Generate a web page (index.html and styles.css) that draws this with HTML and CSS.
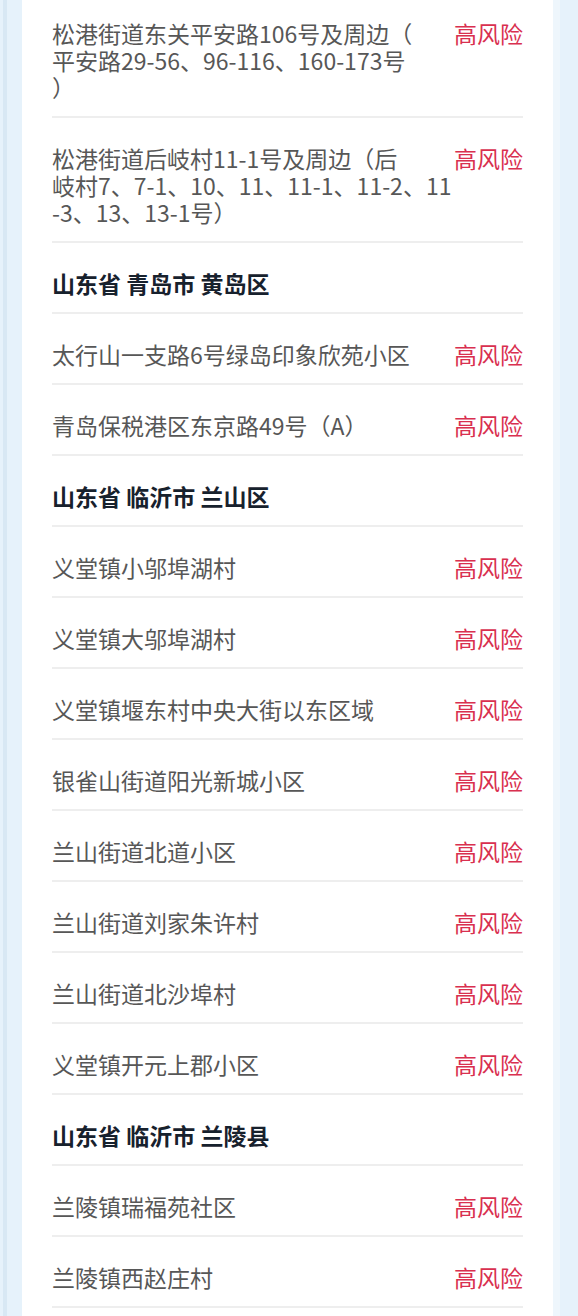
FILE: index.html
```html
<!DOCTYPE html>
<html lang="zh-CN">
<head>
<meta charset="utf-8">
<title>风险地区</title>
<link rel="stylesheet" href="styles.css">
</head>
<body>
<div class="page">
  <div class="card">
    <ul class="list">
      <li class="row"><span class="name">松港街道东关平安路106号及周边（<br>平安路29-56、96-116、160-173号<br>）</span><span class="risk">高风险</span></li>
      <li class="row"><span class="name">松港街道后岐村11-1号及周边（后<br>岐村7、7-1、10、11、11-1、11-2、11<br>-3、13、13-1号）</span><span class="risk">高风险</span></li>
      <li class="row region">山东省 青岛市 黄岛区</li>
      <li class="row"><span class="name">太行山一支路6号绿岛印象欣苑小区</span><span class="risk">高风险</span></li>
      <li class="row"><span class="name">青岛保税港区东京路49号（A）</span><span class="risk">高风险</span></li>
      <li class="row region">山东省 临沂市 兰山区</li>
      <li class="row"><span class="name">义堂镇小邬埠湖村</span><span class="risk">高风险</span></li>
      <li class="row"><span class="name">义堂镇大邬埠湖村</span><span class="risk">高风险</span></li>
      <li class="row"><span class="name">义堂镇堰东村中央大街以东区域</span><span class="risk">高风险</span></li>
      <li class="row"><span class="name">银雀山街道阳光新城小区</span><span class="risk">高风险</span></li>
      <li class="row"><span class="name">兰山街道北道小区</span><span class="risk">高风险</span></li>
      <li class="row"><span class="name">兰山街道刘家朱许村</span><span class="risk">高风险</span></li>
      <li class="row"><span class="name">兰山街道北沙埠村</span><span class="risk">高风险</span></li>
      <li class="row"><span class="name">义堂镇开元上郡小区</span><span class="risk">高风险</span></li>
      <li class="row region">山东省 临沂市 兰陵县</li>
      <li class="row"><span class="name">兰陵镇瑞福苑社区</span><span class="risk">高风险</span></li>
      <li class="row"><span class="name">兰陵镇西赵庄村</span><span class="risk">高风险</span></li>
    </ul>
  </div>
</div>
</body>
</html>
```

FILE: styles.css
```css
html, body {
  margin: 0;
  padding: 0;
}

body {
  background: #e6f2fb;
  font-family: "Noto Sans CJK SC", "Noto Sans", sans-serif;
  height: 1316px;
  overflow: hidden;
}

.page {
  padding: 0 25px 0 15px;
  border-left: 4px solid #d8e8f4;
  margin-left: 3px;
  background: #e6f2fb;
  min-height: 1316px;
  box-sizing: border-box;
}

.card {
  background: #ffffff;
  box-shadow: 7px 0 0 0 #eef6fc;
  min-height: 1316px;
  padding: 0 30px;
}

.list {
  list-style: none;
  margin: 0;
  padding: 0;
}

.row {
  display: flex;
  gap: 20px;
  align-items: flex-start;
  padding: 27px 0 15px;
  border-bottom: 2px solid #eeeeee;
  font-size: 23px;
  line-height: 27px;
}

.row:first-child {
  padding-top: 20px;
}

.name {
  flex: 1;
  min-width: 0;
  color: #575757;
  white-space: nowrap;
}

.risk {
  flex: none;
  color: #d9304f;
}

.region {
  font-weight: 700;
  color: #17212d;
}
```
